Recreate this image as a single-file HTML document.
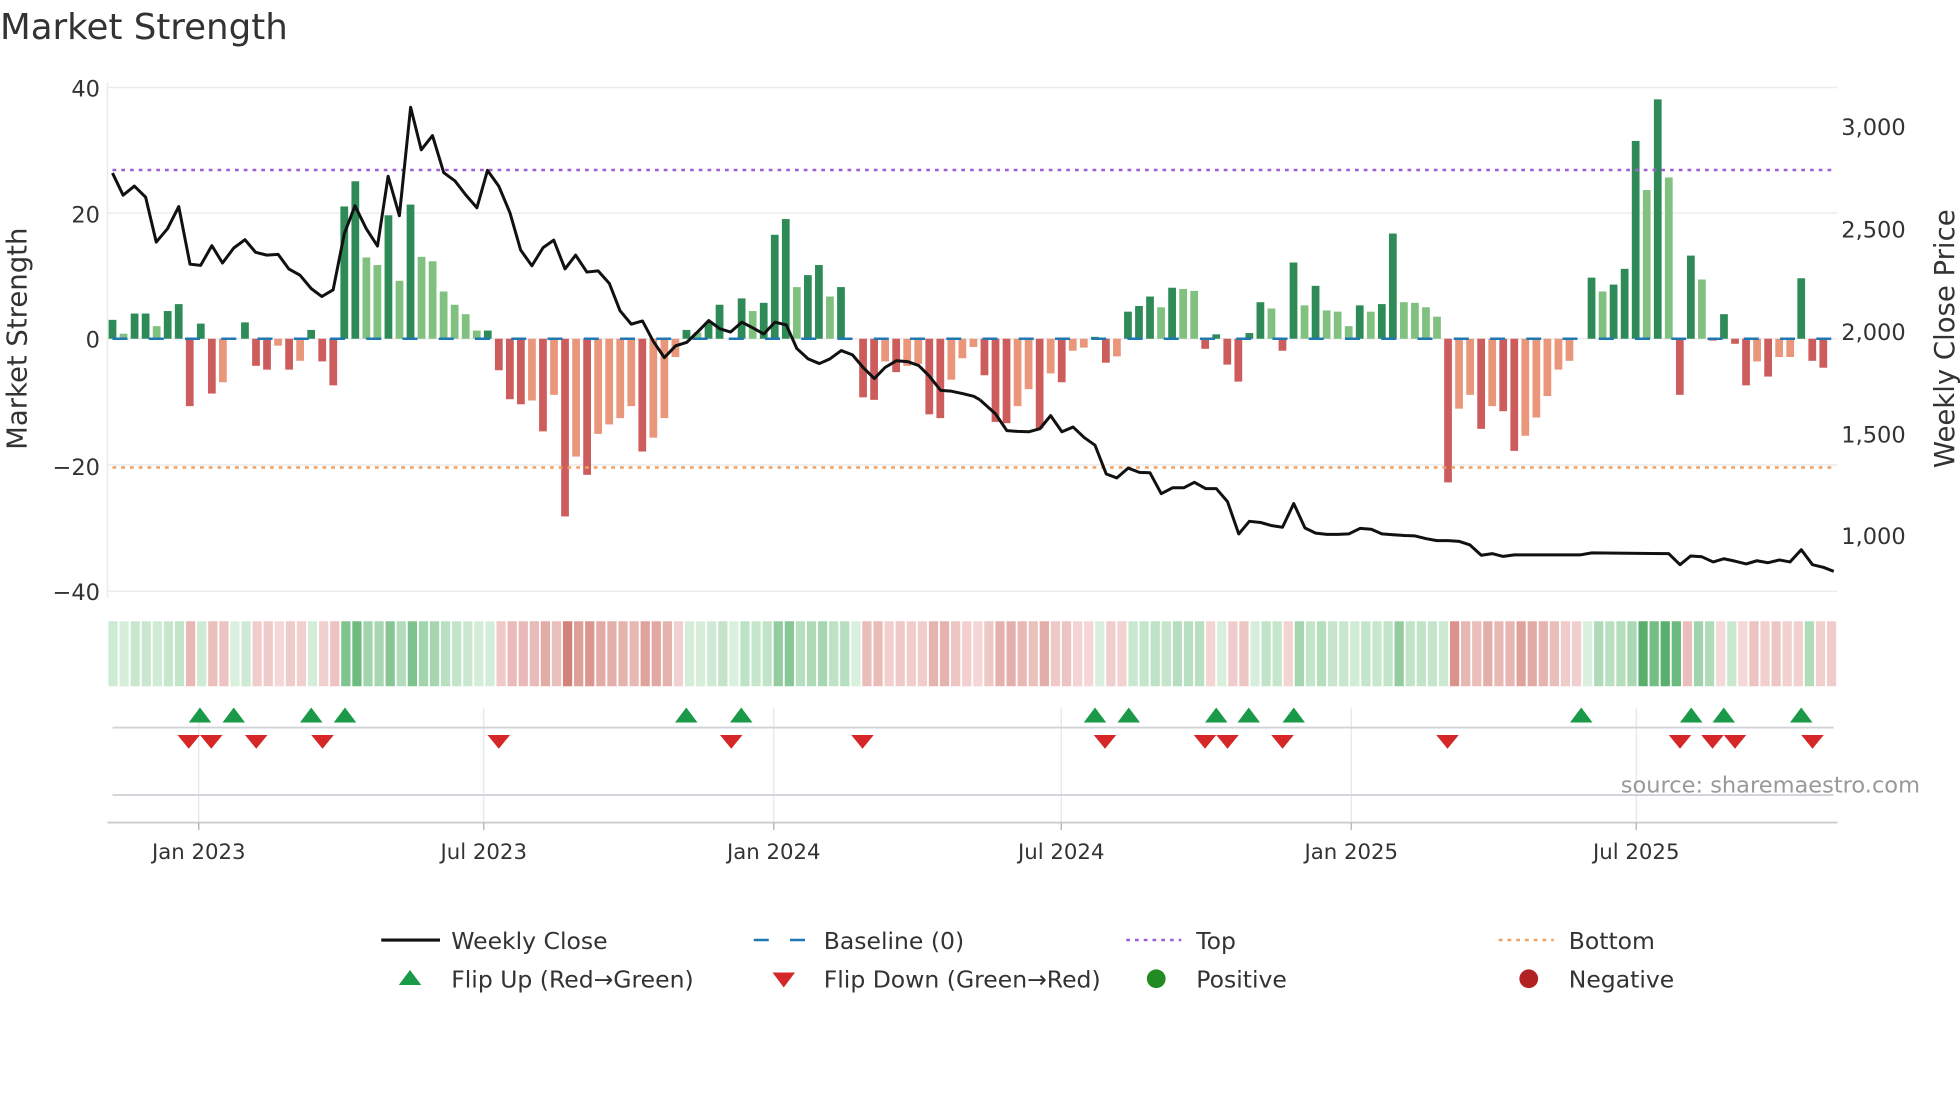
<!DOCTYPE html>
<html><head><meta charset="utf-8"><style>
html,body{margin:0;padding:0;background:#fff;}
svg{display:block;font-family:"DejaVu Sans","Liberation Sans",sans-serif;}
</style></head><body>
<svg id="s" width="1960" height="1102" viewBox="0 0 1568 881.6" xmlns="http://www.w3.org/2000/svg">
<rect width="1568" height="882" fill="#fff"/>
<text x="0" y="31" font-size="28.5" fill="#333">Market Strength</text>
<g stroke="#ececec" stroke-width="1.2">
<line x1="86" y1="70" x2="1470" y2="70"/>
<line x1="86" y1="170.5" x2="1470" y2="170.5"/>
<line x1="86" y1="271" x2="1470" y2="271"/>
<line x1="86" y1="372" x2="1470" y2="372"/>
<line x1="86" y1="473" x2="1470" y2="473"/>
<line x1="86" y1="66" x2="86" y2="478"/>
</g>
<g font-size="18" fill="#333" text-anchor="end">
<text x="80" y="77">40</text>
<text x="80" y="178">20</text>
<text x="80" y="278">0</text>
<text x="80" y="380">−20</text>
<text x="80" y="480">−40</text>
</g>
<g font-size="18" fill="#333" text-anchor="start">
<text x="1473" y="108">3,000</text>
<text x="1473" y="190">2,500</text>
<text x="1473" y="272">2,000</text>
<text x="1473" y="354">1,500</text>
<text x="1473" y="435">1,000</text>
</g>
<text transform="translate(21,271) rotate(-90)" font-size="22" fill="#333" text-anchor="middle">Market Strength</text>
<text transform="translate(1563,271) rotate(-90)" font-size="22" fill="#333" text-anchor="middle">Weekly Close Price</text>
<g id="bars"></g>
<line x1="90" y1="271" x2="1467" y2="271" stroke="#1f77b4" stroke-width="2" stroke-dasharray="12 17"/>
<line x1="90" y1="136" x2="1467" y2="136" stroke="#9b5fd6" stroke-width="2" stroke-dasharray="3 4"/>
<line x1="90" y1="374" x2="1467" y2="374" stroke="#f0a060" stroke-width="2" stroke-dasharray="3 4"/>
<g fill="none" stroke="#111" stroke-width="3" stroke-linejoin="round">
<polyline vector-effect="non-scaling-stroke" transform="matrix(0.5,0,0,0.3155,0,0.59)" points="180,437 197,493 215,470 233,498 250,612 268,578 286,522 304,668 321,671 339,621 356,665 374,627 392,606 409,638 427,645 445,643 462,680 480,696 498,730 515,750 533,733 551,590 568,520 586,578 604,622 621,445 639,545 657,270 674,378 692,342 710,436 728,457 745,492 763,525 780,430 798,470 816,538 833,632 851,672 869,626 886,607 904,680 921,645 939,688 957,685 975,717 992,786 1010,820 1028,812 1045,863 1063,905 1081,875 1099,866 1116,840 1134,811 1152,832 1169,840 1187,815 1204,829 1222,845 1240,815 1258,822 1275,882 1293,908 1311,920 1328,908 1346,887 1364,898 1381,930 1399,958 1416,930 1434,913 1452,915 1470,925 1487,952 1505,988 1522,990 1540,996 1558,1003 1568,1012"/>
<polyline vector-effect="non-scaling-stroke" transform="matrix(0.5,0,0,0.3155,784,0.59)" points="0,1012 25,1048 43,1090 60,1092 78,1093 96,1085 113,1052 131,1093 149,1081 167,1108 184,1127 202,1200 219,1210 237,1185 255,1196 272,1197 290,1250 308,1235 326,1235 343,1221 361,1237 378,1237 396,1270 414,1352 431,1320 449,1323 467,1331 484,1335 502,1275 520,1337 537,1350 555,1353 573,1353 590,1352 608,1338 626,1340 643,1352 661,1354 679,1356 696,1357 714,1364 731,1369 749,1369 767,1371 784,1380 802,1406 820,1402 837,1409 855,1405 961,1405 979,1400 1102,1402 1120,1430 1137,1408 1155,1410 1173,1423 1190,1415 1208,1421 1226,1428 1243,1420 1261,1425 1279,1418 1296,1423 1314,1392 1332,1430 1350,1437 1366,1447"/>
</g>
<g id="strip"></g>
<g stroke="#e4e6ea" stroke-width="1">
<line x1="159" y1="566" x2="159" y2="658"/><line x1="387" y1="566" x2="387" y2="658"/>
<line x1="619" y1="566" x2="619" y2="658"/><line x1="849" y1="566" x2="849" y2="658"/>
<line x1="1081" y1="566" x2="1081" y2="658"/><line x1="1309" y1="566" x2="1309" y2="658"/>
</g>
<line x1="90" y1="582" x2="1467" y2="582" stroke="#d0d3d8" stroke-width="1.5"/>
<line x1="90" y1="636" x2="1467" y2="636" stroke="#d0d3d8" stroke-width="1.5"/>
<line x1="86" y1="658" x2="1470" y2="658" stroke="#cccccc" stroke-width="1.5"/>
<g stroke="#bbb" stroke-width="1.2">
<line x1="159" y1="658" x2="159" y2="664"/><line x1="387" y1="658" x2="387" y2="664"/>
<line x1="619" y1="658" x2="619" y2="664"/><line x1="849" y1="658" x2="849" y2="664"/>
<line x1="1081" y1="658" x2="1081" y2="664"/><line x1="1309" y1="658" x2="1309" y2="664"/>
</g>
<g id="marks"></g>
<text x="1536" y="634" font-size="18" fill="#999" text-anchor="end">source: sharemaestro.com</text>
<g font-size="17" fill="#333" text-anchor="middle">
<text x="159" y="687">Jan 2023</text><text x="387" y="687">Jul 2023</text>
<text x="619" y="687">Jan 2024</text><text x="849" y="687">Jul 2024</text>
<text x="1081" y="687">Jan 2025</text><text x="1309" y="687">Jul 2025</text>
</g>
<line x1="305" y1="752" x2="352" y2="752" stroke="#111" stroke-width="2.5"/>
<line x1="603" y1="752" x2="645" y2="752" stroke="#1f77b4" stroke-width="2" stroke-dasharray="12 17"/>
<line x1="901" y1="752" x2="945" y2="752" stroke="#9b5fd6" stroke-width="2" stroke-dasharray="3 4"/>
<line x1="1199" y1="752" x2="1243" y2="752" stroke="#f0a060" stroke-width="2" stroke-dasharray="3 4"/>
<polygon points="319,788 337,788 328,776" fill="#1a9a48"/>
<polygon points="618,778 636,778 627,790" fill="#d62728"/>
<circle cx="925" cy="783" r="7.5" fill="#228b22"/>
<circle cx="1223" cy="783" r="7.5" fill="#b22222"/>
<g font-size="18.8" fill="#333">
<text x="361" y="759">Weekly Close</text><text x="659" y="759">Baseline (0)</text>
<text x="957" y="759">Top</text><text x="1255" y="759">Bottom</text>
<text x="361" y="790">Flip Up (Red→Green)</text><text x="659" y="790">Flip Down (Green→Red)</text>
<text x="957" y="790">Positive</text><text x="1255" y="790">Negative</text>
</g>
</svg>
<script>
var raw="3d,0.8l,4d,4d,2l,4.4d,5.5d,-10.7r,2.4d,-8.7r,-6.9o,0z,2.6d,-4.3r,-4.9r,-1.1o,-4.9r,-3.5o,1.4d,-3.6r,-7.4r,21d,25d,12.9l,11.7l,19.6d,9.2l,21.3d,13l,12.3l,7.5l,5.4l,3.9l,1.3l,1.3d,-5r,-9.6r,-10.4r,-9.8o,-14.7r,-8.9o,-28.2r,-18.7o,-21.6r,-15.1o,-13.6o,-12.6o,-10.7o,-17.9r,-15.7o,-12.6o,-2.9o,1.4d,1l,2.6d,5.4d,0z,6.4d,4.4l,5.7d,16.5d,19d,8.2l,10.1d,11.7d,6.7l,8.2d,0z,-9.3r,-9.7r,-3.6o,-5.3r,-4.3o,-4o,-12r,-12.6r,-6.5o,-3.1o,-1.3o,-5.8r,-13.2r,-13.4r,-10.7o,-8o,-14.2r,-5.5o,-6.9r,-1.9o,-1.4o,0.3d,-3.8r,-2.8o,4.3d,5.2d,6.7d,5l,8.1d,7.9l,7.6l,-1.6r,0.7d,-4.1r,-6.8r,0.9d,5.8d,4.8l,-1.9r,12.1d,5.3l,8.4d,4.5l,4.3l,2l,5.3d,4.3l,5.5d,16.7d,5.8l,5.7l,5l,3.5l,-22.8r,-11.1o,-8.9o,-14.3r,-10.7o,-11.5r,-17.8r,-15.4o,-12.5o,-9.1o,-4.9o,-3.5o,0z,9.7d,7.5l,8.6d,11.1d,31.4d,23.6l,38d,25.6l,-8.9r,13.2d,9.4l,-0.3r,3.9d,-0.8r,-7.4r,-3.6o,-6r,-2.9o,-2.9o,9.6d,-3.5r,-4.6r".split(",");
var col={d:"#2e8b57",l:"#80c180",r:"#cd5c5c",o:"#e9967a",z:"#80c180"};
var b="",s="";
function mix(a,c,t){return "rgb("+a.map(function(v,i){return Math.round(v+(c[i]-v)*t)}).join(",")+")";}
for(var i=0;i<raw.length;i++){
 var m=raw[i],c=m.slice(-1),v=parseFloat(m),x=90+i*8.83,h=Math.abs(v)*5.04,y=v>=0?271-h:271;
 b+='<rect x="'+(x-3.1).toFixed(2)+'" y="'+y.toFixed(2)+'" width="6.2" height="'+Math.max(h,0).toFixed(2)+'" fill="'+col[c]+'"/>';
 var t=Math.min(Math.abs(v)/30,1),fc;
 if(v>=0) fc=mix([218,240,222],[88,176,108],t); else fc=mix([245,218,218],[208,124,114],t);
 s+='<rect x="'+(86+i*8.87+0.7).toFixed(2)+'" y="497" width="7.4" height="52" fill="'+fc+'"/>';
}
document.getElementById("bars").innerHTML=b;
document.getElementById("strip").innerHTML=s;
var up=[160,187,249,276,549,593,876,903,973,999,1035,1265,1353,1379,1441],dn=[151,169,205,258,399,585,690,884,964,982,1026,1158,1344,1370,1388,1450],mk="";
up.forEach(function(x){mk+='<polygon points="'+(x-9)+',578 '+(x+9)+',578 '+x+',566" fill="#1a9a48"/>';});
dn.forEach(function(x){mk+='<polygon points="'+(x-9)+',588 '+(x+9)+',588 '+x+',599" fill="#d62728"/>';});
document.getElementById("marks").innerHTML=mk;
</script>
</body></html>
